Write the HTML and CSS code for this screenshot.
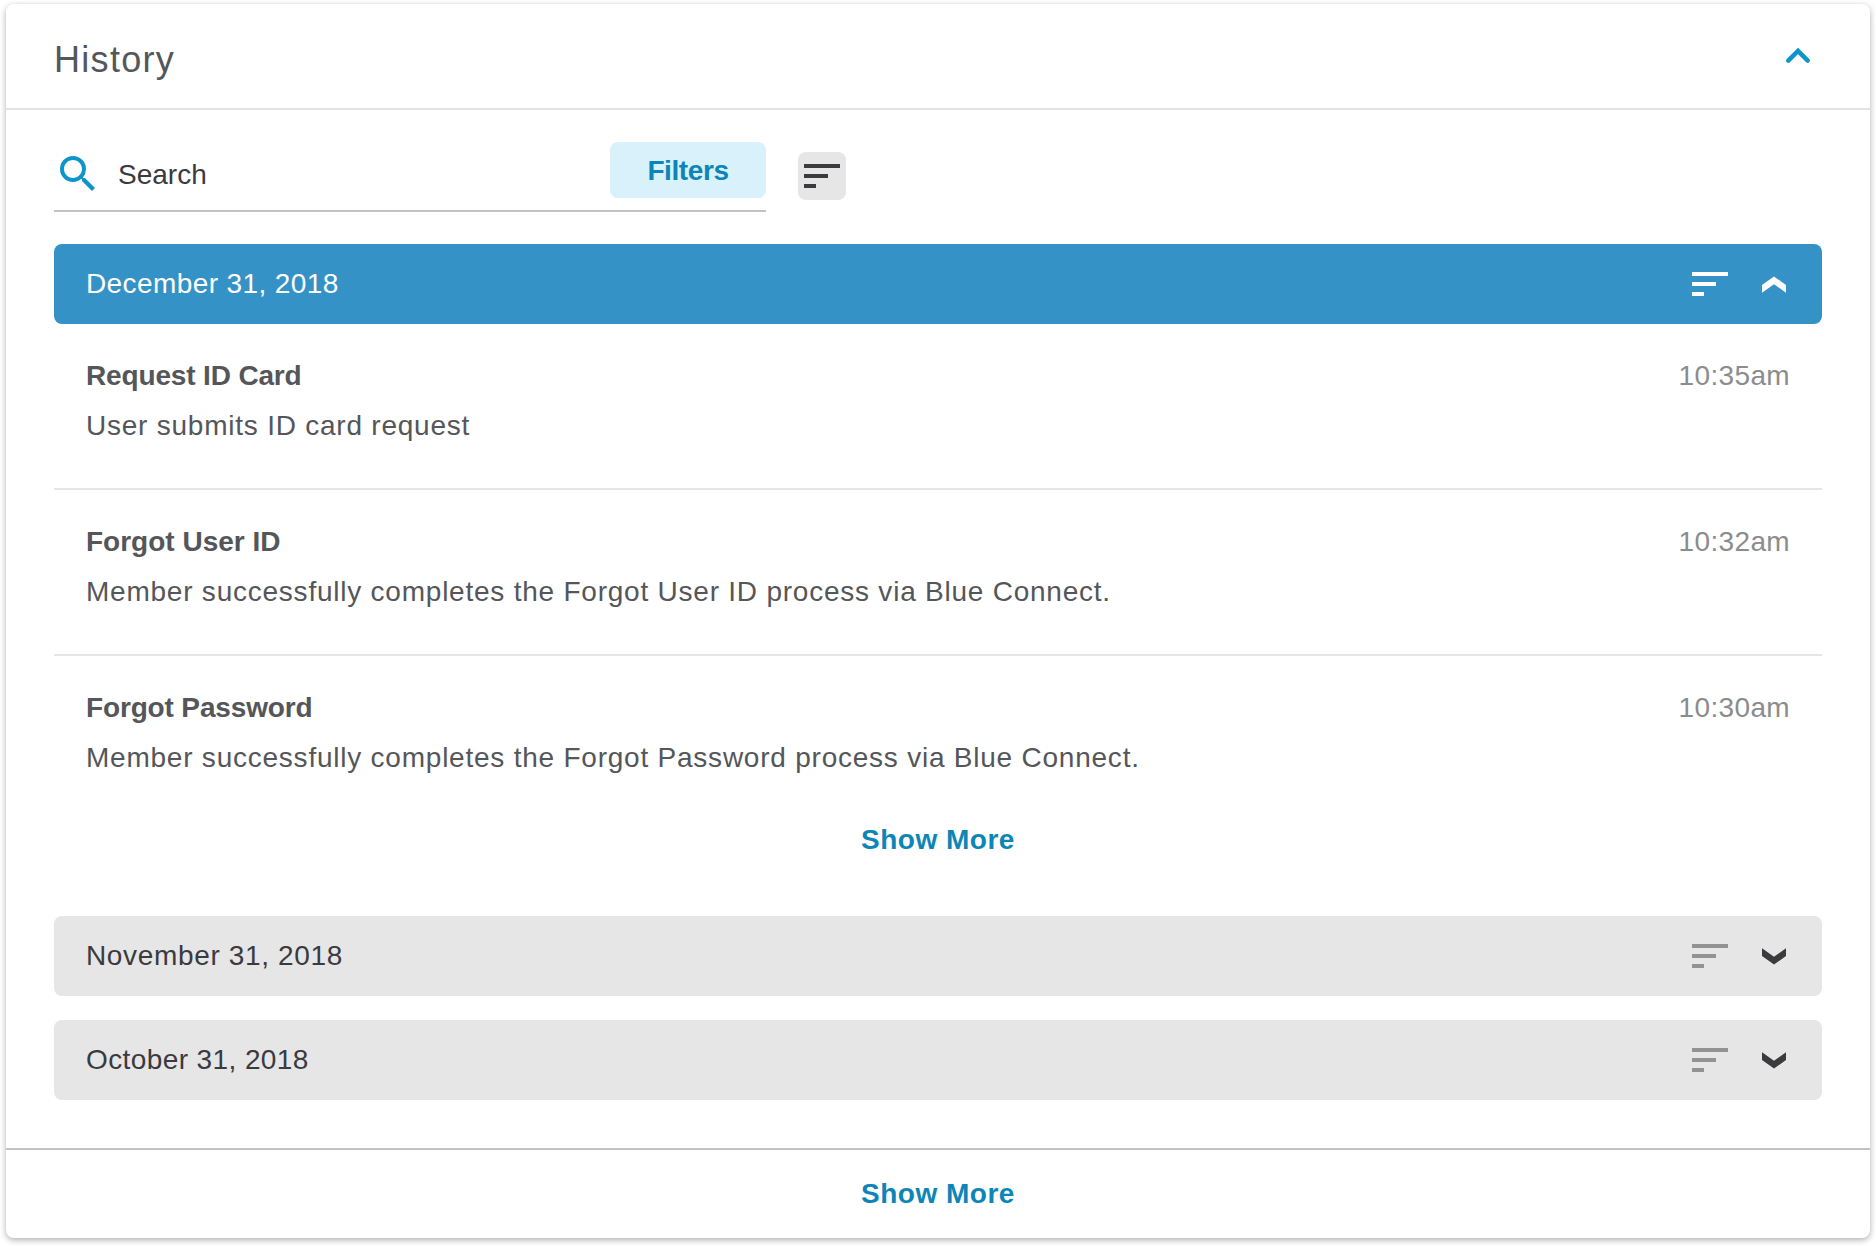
FILE: index.html
```html
<!DOCTYPE html>
<html lang="en">
<head>
<meta charset="utf-8">
<title>History</title>
<link rel="stylesheet" href="styles.css">
</head>
<body>
<svg class="defs" width="0" height="0" aria-hidden="true">
  <symbol id="sort" viewBox="0 0 36 24"><path d="M0 0h36v4H0zM0 10h24v4H0zM0 20h12v4H0z"/></symbol>
  <symbol id="up" viewBox="0 0 24 17"><path d="M0 9 12 .4 24 9v7.800L12 8.200 0 16.800z"/></symbol>
  <symbol id="down" viewBox="0 0 24 17"><path d="M0 8 12 16.600 24 8V.2L12 8.800 0 .2z"/></symbol>
</svg>
<main class="card">
  <header class="card-header">
    <h1 class="title">History</h1>
    <svg class="collapse" viewBox="0 0 48 48"><path d="M14.300 28.700 24 19l9.700 9.700"/></svg>
  </header>
  <div class="content">
    <div class="toolbar">
      <div class="search">
        <svg class="search-icon" viewBox="0 0 24 24"><path d="M15.500 14h-.79l-.28-.27A6.471 6.471 0 0 0 16 9.500 6.500 6.500 0 1 0 9.500 16c1.610 0 3.090-.59 4.230-1.570l.27.28v.79l5 4.990L20.490 19l-4.990-5zm-6 0C7.010 14 5 11.990 5 9.500S7.010 5 9.500 5 14 7.010 14 9.500 11.990 14 9.500 14z"/></svg>
        <span class="search-label">Search</span>
        <button class="filters">Filters</button>
      </div>
      <button class="sort-button"><svg class="sort"><use href="#sort"/></svg></button>
    </div>

    <section class="group">
      <div class="bar bar-open">
        <span class="date">December 31, 2018</span>
        <svg class="sort"><use href="#sort"/></svg>
        <svg class="chevron"><use href="#up"/></svg>
      </div>
      <ul class="entries">
        <li class="entry">
          <div class="entry-head"><h2 class="entry-title entry-title-tight">Request ID Card</h2><time class="time">10:35am</time></div>
          <p class="entry-text">User submits ID card request</p>
        </li>
        <li class="entry">
          <div class="entry-head"><h2 class="entry-title">Forgot User ID</h2><time class="time">10:32am</time></div>
          <p class="entry-text">Member successfully completes the Forgot User ID process via Blue Connect.</p>
        </li>
        <li class="entry">
          <div class="entry-head"><h2 class="entry-title entry-title-tight">Forgot Password</h2><time class="time">10:30am</time></div>
          <p class="entry-text">Member successfully completes the Forgot Password process via Blue Connect.</p>
        </li>
      </ul>
      <a class="more">Show More</a>
    </section>

    <div class="bar">
      <span class="date date-november">November 31, 2018</span>
      <svg class="sort"><use href="#sort"/></svg>
      <svg class="chevron"><use href="#down"/></svg>
    </div>
    <div class="bar">
      <span class="date">October 31, 2018</span>
      <svg class="sort"><use href="#sort"/></svg>
      <svg class="chevron"><use href="#down"/></svg>
    </div>
  </div>
  <footer class="card-footer"><a class="more">Show More</a></footer>
</main>
</body>
</html>
```
FILE: styles.css
```css
* {
  box-sizing: border-box;
}

body {
  margin: 0;
  padding: 4px 6px 8px;
  background: #fff;
  color: #55565a;
  font: 28px/40px "Liberation Sans", Arial, sans-serif;
}

h1, h2, p, ul {
  margin: 0;
  padding: 0;
}

button {
  border: 0;
  padding: 0;
  font: inherit;
}

svg {
  display: block;
  flex: none;
}

.defs {
  position: absolute;
}

.card {
  height: 1234px;
  border-radius: 8px;
  background: #fff;
  box-shadow: 0 2px 6px rgba(0, 0, 0, .32);
}

.card-header {
  display: flex;
  justify-content: space-between;
  height: 106px;
  padding: 28px 48px 0;
  border-bottom: 2px solid #e3e3e3;
}

.title {
  padding-top: 4px;
  font-size: 36px;
  font-weight: 400;
  line-height: 48px;
  letter-spacing: 1.3px;
}

.collapse {
  width: 48px;
  height: 48px;
  fill: none;
  stroke: #0c94cb;
  stroke-width: 4.5;
  stroke-linecap: round;
}

.content {
  display: flex;
  flex-direction: column;
  gap: 24px;
  height: 1038px;
  padding: 32px 48px 0;
}

.toolbar {
  display: flex;
  gap: 32px;
  height: 78px;
}

.search {
  display: flex;
  align-items: flex-start;
  width: 712px;
  height: 70px;
  border-bottom: 2px solid #c3c3c3;
}

.search-icon {
  width: 48px;
  height: 48px;
  margin-top: 8px;
  fill: #0c94cb;
}

.search-label {
  flex: 1;
  padding: 13px 0 0 16px;
  color: #3a3a3f;
}

.filters {
  width: 156px;
  height: 56px;
  padding-top: 1px;
  border-radius: 8px;
  background: #d8f1fa;
  color: #0d86b7;
  font-weight: 700;
  letter-spacing: -.4px;
}

.sort-button {
  display: flex;
  align-items: center;
  justify-content: center;
  width: 48px;
  height: 48px;
  margin-top: 10px;
  border-radius: 8px;
  background: #e6e6e6;
}

.sort {
  width: 36px;
  height: 24px;
  fill: #3a3a3f;
}

.group {
  padding-bottom: 32px;
}

.bar {
  display: flex;
  align-items: center;
  flex: none;
  height: 80px;
  padding: 0 36px 0 32px;
  border-radius: 8px;
  background: #e6e6e6;
  color: #3a3a3f;
}

.bar .sort {
  margin-right: 34px;
  fill: #929292;
}

.chevron {
  width: 24px;
  height: 17px;
  fill: #3a3a3f;
}

.bar-open {
  background: #3592c7;
  color: #fff;
}

.bar-open .sort,
.bar-open .chevron {
  fill: #fff;
}

.date {
  flex: 1;
  letter-spacing: .4px;
}

.date-november {
  letter-spacing: .65px;
}

.entries {
  list-style: none;
}

.entry {
  padding: 32px;
  padding-bottom: 42px;
}

.entry + .entry {
  border-top: 2px solid #e6e6e6;
}

.entry-head {
  display: flex;
  justify-content: space-between;
  margin-bottom: 10px;
}

.entry-title {
  font-size: 28px;
  font-weight: 700;
}

.entry-title-tight {
  letter-spacing: -.15px;
}

.time {
  color: #8c8c8c;
  letter-spacing: .35px;
}

.entry-text {
  letter-spacing: .77px;
}

.more {
  display: block;
  color: #0d86b7;
  font-weight: 700;
  letter-spacing: .5px;
  text-align: center;
}

.card-footer {
  height: 90px;
  padding-top: 24px;
  border-top: 2px solid #c3c3c3;
}
```
